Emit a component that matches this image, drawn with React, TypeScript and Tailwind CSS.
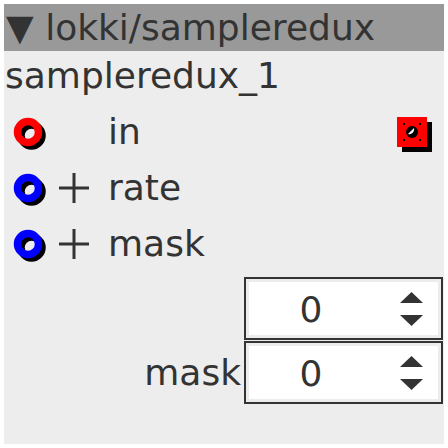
function PortCircle({ color }: { color: string }) {
  return (
    <svg width="28" height="28" viewBox="0 0 28 28" className="overflow-visible shrink-0">
      <circle cx="17.5" cy="17.5" r="10.5" fill="none" stroke="#000" strokeWidth="7.5" />
      <circle cx="14" cy="14" r="10.5" fill="none" stroke={color} strokeWidth="7.5" />
    </svg>
  );
}

function Plus() {
  return (
    <svg width="30" height="30" viewBox="0 0 30 30" className="shrink-0">
      <line x1="0" y1="15" x2="30" y2="15" stroke="#333" strokeWidth="3" />
      <line x1="15" y1="0" x2="15" y2="30" stroke="#333" strokeWidth="3" />
    </svg>
  );
}

function RedSquare() {
  return (
    <svg width="30" height="30" viewBox="0 0 30 30" className="overflow-visible shrink-0">
      <rect x="5" y="5" width="30" height="30" fill="#000" />
      <rect x="0" y="0" width="30" height="30" fill="#ff0000" />
      <rect x="6" y="6" width="2" height="2" fill="#000" />
      <rect x="22" y="6" width="2" height="2" fill="#000" />
      <rect x="6" y="22" width="2" height="2" fill="#000" />
      <rect x="22" y="22" width="2" height="2" fill="#000" />
      <circle cx="15" cy="15" r="6" fill="#000" />
      <path d="M17 11 A5 5 0 0 1 11 17 Z" fill="#fff" />
    </svg>
  );
}

function Arrows() {
  return (
    <div className="flex flex-col items-center gap-[12px]">
      <svg width="23" height="11" viewBox="0 0 23 11">
        <polygon points="11.5,0 23,11 0,11" fill="#333" />
      </svg>
      <svg width="23" height="11" viewBox="0 0 23 11">
        <polygon points="0,0 23,0 11.5,11" fill="#333" />
      </svg>
    </div>
  );
}

function SpinBox() {
  return (
    <div className="w-[199px] h-[63px] border-2 border-[#333] bg-[#ececec] p-[3px]">
      <div className="w-full h-full bg-white flex items-center">
        <div className="w-[124px] text-center leading-[42px] pt-[2px]">0</div>
        <div className="ml-[27px]">
          <Arrows />
        </div>
      </div>
    </div>
  );
}

export default function App() {
  return (
    <div className="w-[448px] h-[448px] bg-white p-[4px] font-['DejaVu_Sans',sans-serif]">
      <div className="w-[440px] h-[440px] bg-[#ededed] flex flex-col text-[36px] text-[#333]">
        <div className="h-[47px] bg-[#999999] pl-[2px] pt-[1px] leading-[46px] whitespace-nowrap">
          ▼ lokki/sampleredux
        </div>
        <div className="h-[53px] leading-[49px] pl-[1px]">sampleredux_1</div>
        <div className="h-[56px] flex items-center">
          <div className="ml-[10px]">
            <PortCircle color="#ff0000" />
          </div>
          <div className="w-[66px]" />
          <div className="leading-[42px]">in</div>
          <div className="ml-auto mr-[17px] flex items-center">
            <RedSquare />
          </div>
        </div>
        <div className="h-[56px] flex items-center">
          <div className="ml-[10px]">
            <PortCircle color="#0000ff" />
          </div>
          <div className="w-[66px] flex pl-[17px]">
            <Plus />
          </div>
          <div className="leading-[42px]">rate</div>
        </div>
        <div className="h-[56px] flex items-center">
          <div className="ml-[10px]">
            <PortCircle color="#0000ff" />
          </div>
          <div className="w-[66px] flex pl-[17px]">
            <Plus />
          </div>
          <div className="leading-[42px]">mask</div>
        </div>
        <div className="mt-[5px] flex flex-col gap-[1px]">
          <div className="flex">
            <div className="w-[240px]" />
            <SpinBox />
          </div>
          <div className="flex items-center">
            <div className="w-[240px] text-right pr-[3px] leading-[42px]">mask</div>
            <SpinBox />
          </div>
        </div>
      </div>
    </div>
  );
}
